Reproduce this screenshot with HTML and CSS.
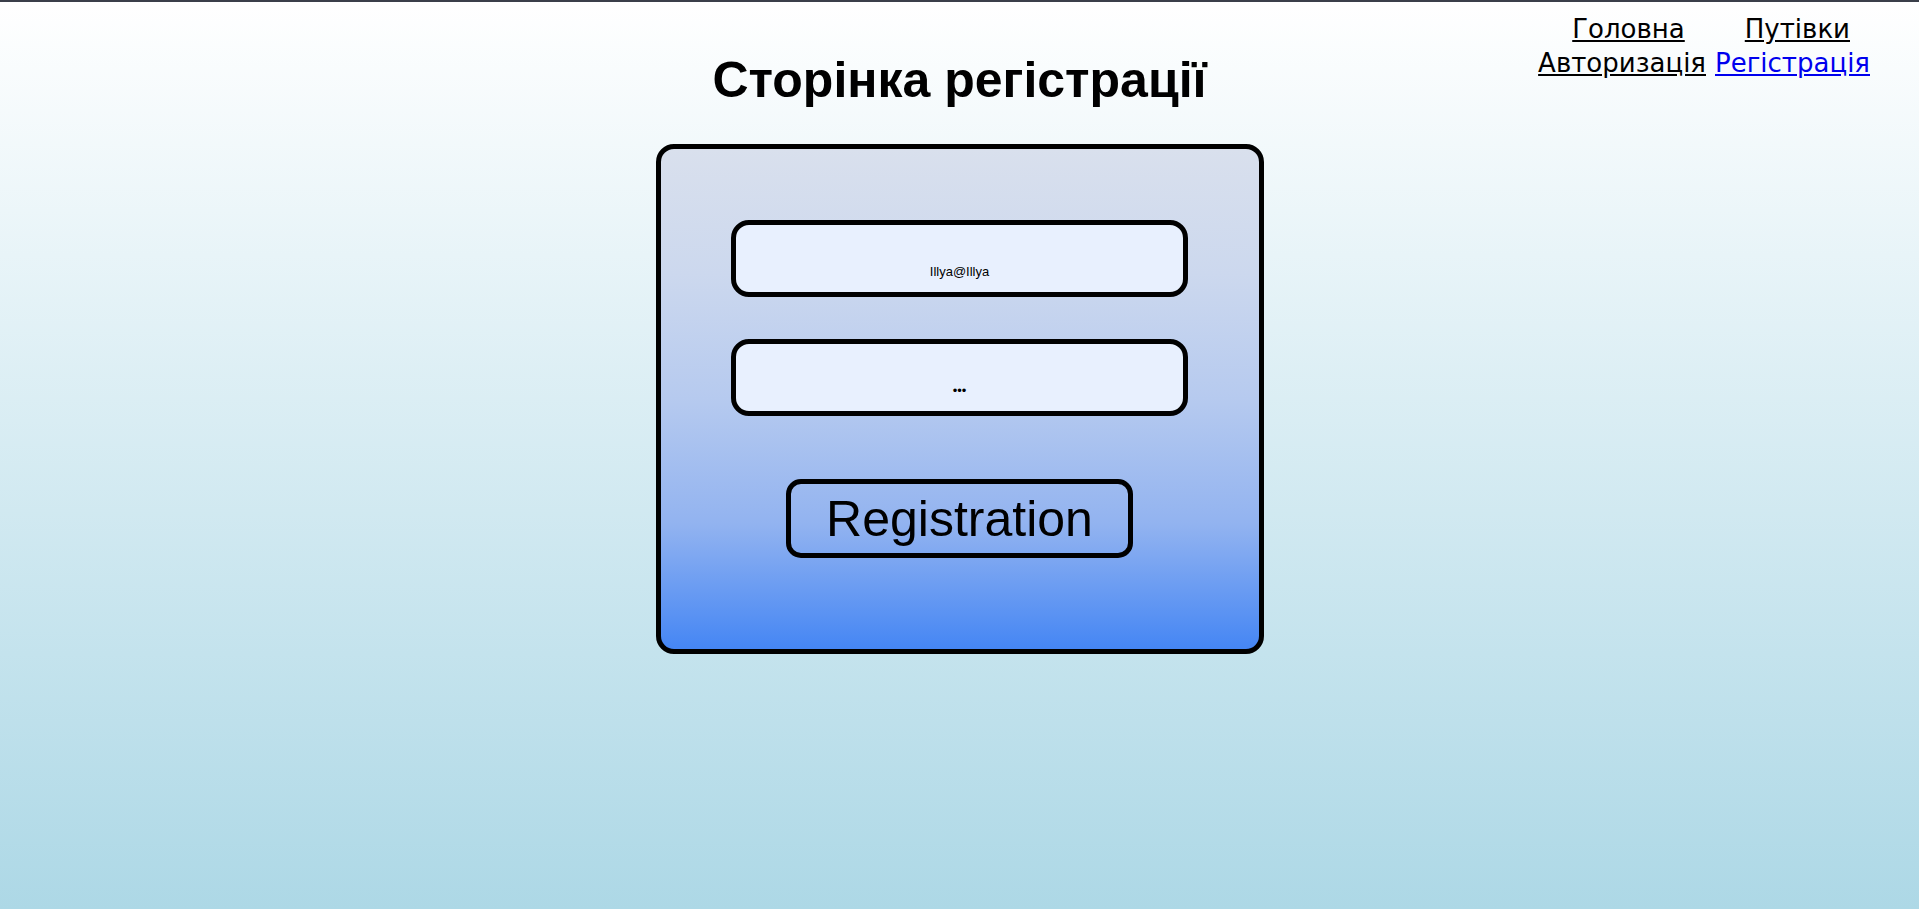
FILE: index.html
```html
<!DOCTYPE html>
<html>
<head>
  <meta charset="utf-8">
  <title>Сторінка регістрації</title>
  <link rel="stylesheet" href="styles.css">
</head>
<body>
  <header class="header">
    <div></div>
    <h1>Сторінка регістрації</h1>
    <nav class="nav">
      <div class="nav-row nav-row-top">
        <a href="#">Головна</a>
        <a href="#">Путівки</a>
      </div>
      <div class="nav-row">
        <a href="#">Авторизація</a>
        <a href="#" class="active">Регістрація</a>
      </div>
    </nav>
  </header>

  <form class="card" id="registerForm">
    <input type="text" class="field" name="email" value="Illya@Illya">
    <input type="password" class="field field-pass" name="password" value="123">
    <button type="submit">Registration</button>
  </form>
</body>
</html>
```

FILE: styles.css
```css
html {
  min-height: 100%;
  background: linear-gradient(#ffffff, #add8e6);
}

body {
  font-family: "Liberation Sans", Arial, sans-serif;
  margin: 0;
  padding: 0;
  border-top: 2px solid #3a3f4a;
}

.header {
  display: grid;
  grid-template-columns: 1fr auto 1fr;
  align-items: start;
}

h1 {
  margin: 49px 0 0;
  font-size: 50px;
  font-weight: bold;
  color: #000;
}

.nav {
  justify-self: end;
  display: flex;
  flex-direction: column;
  align-items: flex-end;
  margin-top: 10px;
  margin-right: 49px;
  font-family: "DejaVu Sans", Verdana, sans-serif;
  font-size: 26px;
  line-height: 34px;
}

.nav-row {
  display: flex;
  gap: 9px;
}

.nav-row-top {
  gap: 60px;
  margin-right: 20px;
}

.nav a {
  color: #000;
  text-decoration: underline;
}

.nav a.active {
  color: #0000ee;
}

.card {
  box-sizing: border-box;
  width: 608px;
  height: 510px;
  margin: 35px auto 0;
  padding-top: 71px;
  display: flex;
  flex-direction: column;
  align-items: center;
  border: 5px solid #000;
  border-radius: 18px;
  background: linear-gradient(#d9e0ed 0%, #ccd8ee 25%, #b6caef 50%, #92b3f0 75%, #4586f4 100%);
}

.field {
  box-sizing: border-box;
  width: 457px;
  height: 77px;
  padding: 26px 10px 0;
  border: 5px solid #000;
  border-radius: 18px;
  background-color: #e8f0fe;
  color: #000;
  font-family: "Liberation Sans", Arial, sans-serif;
  font-size: 13px;
  text-align: center;
  outline: none;
}

.field-pass {
  margin-top: 42px;
}

button {
  box-sizing: border-box;
  width: 347px;
  height: 79px;
  margin-top: 63px;
  padding: 0;
  border: 5px solid #000;
  border-radius: 15px;
  background: transparent;
  color: #000;
  font-family: "Liberation Sans", Arial, sans-serif;
  font-size: 50px;
  cursor: pointer;
}
```
